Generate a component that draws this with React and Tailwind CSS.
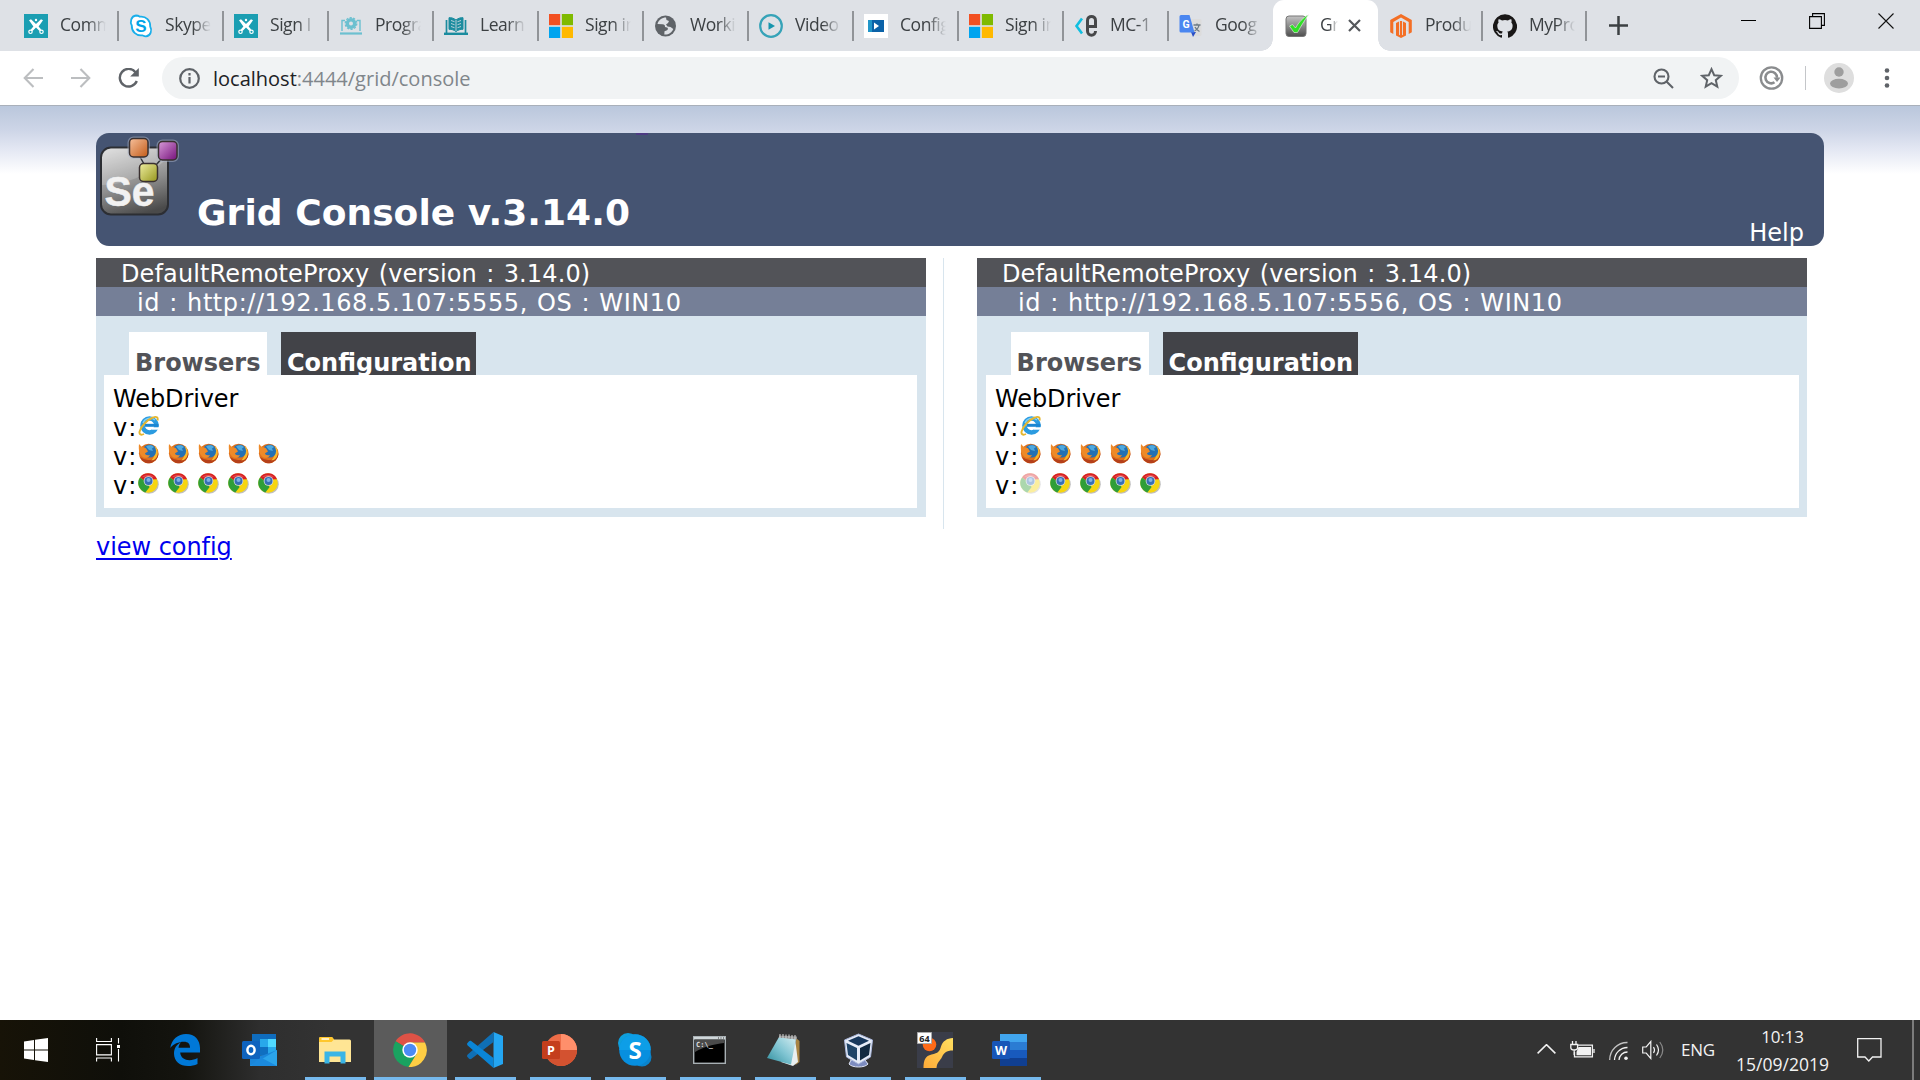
import React from "react";

/* ---------- tab strip favicons ---------- */

const Svg = ({ w = 24, h = 24, box = "0 0 24 24", className = "", children, ...rest }) => (
  <svg width={w} height={h} viewBox={box} className={`shrink-0 ${className}`} fill="none" {...rest}>
    {children}
  </svg>
);

const Scissors = () => (
  <Svg>
    <path d="M0 0h24v24H0z" fill="#1b9eb2" />
    <path d="M5 6.200l2-1L12 10l5-4.800 2 1-4.400 6.300 2.600 3-1.700 1.500-3.500-3.500L8.500 17l-1.700-1.500 2.600-3z" fill="#fff" />
    <circle cx="6.500" cy="17.800" r="1.700" stroke="#fff" strokeWidth="1.200" />
    <circle cx="17.500" cy="17.800" r="1.700" stroke="#fff" strokeWidth="1.200" />
    <circle cx="12" cy="6" r="1.200" fill="#fff" />
  </Svg>
);
const SkypeTab = () => (
  <Svg>
    <path d="M7 1.500c1.500 0 3 .6 4 1.200 6-.7 10.600 4 10.200 9.800 2 3.500.7 9.500-4.200 9.800-1.600.1-2.800-.6-3.800-1C7 22 2.500 17.500 2.800 11.500.8 8 2 2 7 1.500z" fill="#fff" stroke="#19aeea" strokeWidth="1.800" />
    <text x="12" y="18" textAnchor="middle" fontFamily="Liberation Sans" fontWeight="700" fontSize="17" fill="#00a4e8">S</text>
  </Svg>
);
const Program = () => (
  <Svg stroke="#6cc0d0">
    <path d="M3 17V6.500h3M18 6.500h3V17" strokeWidth="1.400" />
    <circle cx="12" cy="9.500" r="3.700" strokeWidth="3.400" />
    <circle cx="12" cy="9.500" r="5.800" strokeWidth="1.300" strokeDasharray="2.200 1.400" />
    <path d="M1 19.500h22" strokeWidth="2.200" />
  </Svg>
);
const Book = () => (
  <Svg stroke="#1b8c9f">
    <path d="M2.500 19V6M21.500 19V6" strokeWidth="1.700" />
    <path d="M12 6C9.500 4 7.500 3.600 5 3.700v11.600c2.500-.1 5 .6 7 2.300 2-1.700 4.500-2.400 7-2.300V3.700C16.500 3.600 14.500 4 12 6z" fill="#1b8c9f" />
    <path d="M7 6.500l3.500 1.200M7 9.500l3.500 1.200M7 12.500l3.500 1.200M17 6.500l-3.500 1.200M17 9.500l-3.500 1.200M17 12.500l-3.500 1.200M12 6v11" stroke="#dee1e6" strokeWidth=".8" />
    <path d="M0 19.800h24" strokeWidth="2.400" />
  </Svg>
);
const Microsoft = () => (
  <Svg>
    <path d="M0 0h11.200v11.200H0z" fill="#f25022" />
    <path d="M12.800 0H24v11.200H12.800z" fill="#7fba00" />
    <path d="M0 12.800h11.200V24H0z" fill="#00a4ef" />
    <path d="M12.800 12.800H24V24H12.800z" fill="#ffb900" />
  </Svg>
);
const Globe = () => (
  <Svg>
    <circle cx="11.500" cy="12" r="10.500" fill="#5f6368" />
    <path d="M12 3.500C8 3.500 4.500 6 3.500 10l5 .2c2 0 2.500 1 2.500 2.800l2 .5c1.500.5 1 2.500-.5 3l-2 .8-.2 3.200c4 .5 7.500-2 9-5.500l-2.800-2-3-.5-1.500-2 2-1.500 1-2-2.500-1z" fill="#dee1e6" />
    <path d="M13 4.500l3 3-1.500 3 3 2.500 3-1c0-4-3-7-7.500-7.500z" fill="#5f6368" />
  </Svg>
);
const Video = () => (
  <Svg>
    <circle cx="12" cy="12" r="10.800" stroke="#36a3b8" strokeWidth="2.200" />
    <path d="M9.500 8.200v7.600l6.500-3.800z" fill="#1795ad" />
  </Svg>
);
const ConfigFav = () => (
  <Svg>
    <path d="M0 0h24v24H0z" fill="#fff" />
    <path d="M4 6h16v12H4z" fill="#0b62a8" />
    <path d="M4 6h4v12H4z" fill="#2196c9" />
    <path d="M10 8.500v7l5-3.500z" fill="#fff" />
  </Svg>
);
const Mc = () => (
  <Svg>
    <path d="M8 4.500L2.500 12 8 19.500" stroke="#10bfe0" strokeWidth="2.600" />
    <path d="M13.500 12.500h8V6.500c0-5.500-8-5.500-8 0v10.500c0 5.500 8 5.500 8 0" stroke="#464749" strokeWidth="3" />
  </Svg>
);
const Translate = () => (
  <Svg>
    <path d="M9 5h12a1.500 1.500 0 011.500 1.500v14A1.500 1.500 0 0121 22h-7z" fill="#dcdcdc" />
    <path d="M12 18h5l-3 5z" fill="#2b4fc4" />
    <path d="M2 1h8.500L15.500 18.500H2A1.500 1.500 0 01.500 17V2.500A1.500 1.500 0 012 1z" fill="#4a86f0" />
    <text x="7" y="13.500" textAnchor="middle" fontFamily="Roboto" fontWeight="700" fontSize="10.500" fill="#fff">G</text>
    <path d="M14.500 11h7M18 9.500V11M20 11c-.5 3-2.500 5-4.500 6M16 13c1 2 2.500 3.500 4.500 4.500" stroke="#6d7b85" strokeWidth="1.300" />
  </Svg>
);
const CheckFav = () => (
  <Svg>
    <defs>
      <linearGradient id="ck" x1="0" y1="0" x2="0" y2="1">
        <stop offset="0" stopColor="#c4c4c4" />
        <stop offset="1" stopColor="#4e4e4e" />
      </linearGradient>
    </defs>
    <rect x="1" y="2" width="20" height="20.500" rx="3" fill="url(#ck)" stroke="#777" />
    <path d="M4.500 12l3-1.500 3 3.500C13.500 8.500 18 3.500 23.500.8 19.500 6.500 16 12 12.500 18.500H9z" fill="#2fe025" stroke="#eee" strokeWidth=".6" />
  </Svg>
);
const Magento = () => (
  <Svg fill="#f46f25">
    <path d="M12 0L1.200 6v12.200l3.100 1.700V7.900L12 3.600l7.700 4.300v12l3.100-1.700V6z" />
    <path d="M7 9v12.500l5 2.500 5-2.500V9l-3-1.500v13.200l-.9.500V7h-2.200v14.200l-.9-.5V7.500z" />
  </Svg>
);
const Github = () => (
  <Svg fill="#191717">
    <path d="M12 .3a12 12 0 00-3.800 23.400c.6.100.8-.3.800-.6v-2c-3.300.7-4-1.600-4-1.600-.6-1.400-1.400-1.800-1.400-1.800-1-.7.100-.7.100-.7 1.200 0 1.900 1.200 1.900 1.200 1 1.800 2.800 1.300 3.500 1 0-.8.400-1.300.7-1.600-2.700-.3-5.500-1.300-5.500-6 0-1.200.5-2.300 1.300-3.100-.2-.4-.6-1.600 0-3.200 0 0 1-.3 3.400 1.200a11.500 11.500 0 016 0c2.300-1.500 3.300-1.200 3.300-1.200.6 1.600.2 2.800 0 3.200.9.800 1.300 1.900 1.300 3.200 0 4.600-2.800 5.600-5.500 5.900.5.400.9 1 .9 2.200v3.300c0 .3.100.7.800.6A12 12 0 0012 .3" />
  </Svg>
);

const TABS = [
  [Scissors, "Comm"], [SkypeTab, "Skype"], [Scissors, "Sign I"], [Program, "Progra"], [Book, "Learn"],
  [Microsoft, "Sign in"], [Globe, "Worki"], [Video, "Video"], [ConfigFav, "Config"], [Microsoft, "Sign in"],
  [Mc, "MC-1"], [Translate, "Goog"],
];

function Tab({ Icon, label, wide = true, last = false }) {
  return (
    <div className={`${wide ? "w-[105px]" : "w-[104px]"} relative flex h-[51px] shrink-0 items-center pl-[11px]`}>
      <Icon />
      <span className="-mt-[2px] ml-3 w-[46px] overflow-hidden mask-r-from-60% text-[17.5px] tracking-[-0.45px] whitespace-nowrap text-[#3c4043]">{label}</span>
      {!last && <i className="absolute top-[11px] -right-px h-[30px] w-[2px] bg-[#919498]" />}
    </div>
  );
}

function TabStrip() {
  return (
    <div className="flex h-[51px] bg-[#dee1e6] pl-[13px]">
      {TABS.map(([Icon, label], i) => (
        <Tab key={i} Icon={Icon} label={label} last={i === TABS.length - 1} />
      ))}
      <div className="relative flex h-[51px] w-[105px] shrink-0 items-center rounded-t-[11px] bg-white pl-3">
        <i className="absolute bottom-0 -left-[12px] size-3 bg-[radial-gradient(circle_at_0_0,transparent_11.5px,white_12px)]" />
        <i className="absolute -right-[12px] bottom-0 size-3 bg-[radial-gradient(circle_at_100%_0,transparent_11.5px,white_12px)]" />
        <CheckFav />
        <span className="-mt-[2px] ml-[11px] w-[18px] overflow-hidden mask-r-from-50% text-[17.5px] tracking-[-0.45px] whitespace-nowrap text-[#3c4043]">Gr</span>
        <Svg w={13} h={13} box="0 0 13 13" className="ml-[10px]" stroke="#55585c" strokeWidth="2.200">
          <path d="M1 1l11 11M12 1L1 12" />
        </Svg>
      </div>
      <Tab Icon={Magento} label="Produ" wide={false} />
      <Tab Icon={Github} label="MyPro" wide={false} />
      <div className="flex flex-1 items-start">
        <Svg w={19} h={19} box="0 0 19 19" className="mt-[16px] ml-[23px]" stroke="#3c4043" strokeWidth="2.500">
          <path d="M9.500 0v19M0 9.500h19" />
        </Svg>
        <Svg w={15} h={15} box="0 0 15 15" className="mt-[14px] ml-[113px]" stroke="#000">
          <path d="M0 6.500h15" />
        </Svg>
        <Svg w={16} h={16} box="0 0 16 16" className="mt-[13px] ml-[53px]" stroke="#000" strokeWidth="1.100">
          <path d="M.6 3.600h11.800v11.800H.6zM3.600 3.500V.6h11.800v11.800h-3" />
        </Svg>
        <Svg w={16} h={16} box="0 0 16 16" className="mt-[13px] ml-[53px]" stroke="#111" strokeWidth="1.100">
          <path d="M.5.500l15 15M15.500.500l-15 15" />
        </Svg>
      </div>
    </div>
  );
}

function Toolbar() {
  return (
    <div className="flex h-[54px] items-center bg-white">
      <Svg w={20} h={20} box="0 0 20 20" className="ml-[23px]" stroke="#bcbec0" strokeWidth="2.100">
        <path d="M20 10H2M10.500 1L1.700 10l8.800 9" />
      </Svg>
      <Svg w={20} h={20} box="0 0 20 20" className="ml-[28px]" stroke="#bcbec0" strokeWidth="2.100">
        <path d="M0 10h18M9.500 1l8.800 9-8.800 9" />
      </Svg>
      <Svg w={22} h={20} box="0 0 22 20" className="ml-[27px]">
        <path d="M17.500 4.200A8.800 8.800 0 1018.800 13" stroke="#5f6368" strokeWidth="2.400" />
        <path d="M20.800 0v8.500h-8.600z" fill="#5f6368" />
      </Svg>
      <div className="ml-[22px] flex h-[42px] w-[1577px] items-center rounded-full bg-[#f1f3f4] pr-[16px] pl-[17px]">
        <Svg w={21} h={21} box="0 0 21 21">
          <circle cx="10.500" cy="10.500" r="9.300" stroke="#5f6368" strokeWidth="2.200" />
          <path d="M10.500 9v6.500M10.500 5v2.400" stroke="#5f6368" strokeWidth="2.200" />
        </Svg>
        <span className="mt-px ml-[13px] text-xl whitespace-nowrap text-[#80868b]">
          <span className="text-[#202124]">localhost</span>:4444/grid/console
        </span>
        <Svg w={21} h={21} box="0 0 21 21" className="ml-auto" stroke="#5f6368" strokeWidth="2.100">
          <circle cx="8.500" cy="8.500" r="7" />
          <path d="M13.500 13.500l6.500 6.500M5 8.500h7" />
        </Svg>
        <Svg w={23} h={22} box="0 0 23 22" className="ml-[26px]" stroke="#5f6368" strokeWidth="2">
          <path d="M11.500 2.200l2.700 6 6.600.6-5 4.400 1.500 6.400-5.800-3.400-5.800 3.400 1.500-6.400-5-4.400 6.600-.6z" />
        </Svg>
      </div>
      <Svg w={25} h={24} box="0 0 25 24" className="ml-[20px]" stroke="#8a8c8e" strokeWidth="2.300">
        <circle cx="12.500" cy="12" r="10.700" />
        <path d="M15.500 16.300a5.800 5.800 0 112.500-4.500" strokeWidth="2.600" />
        <path d="M14.500 11.500h7l-3.500 4.500z" fill="#8a8c8e" stroke="none" />
      </Svg>
      <i className="ml-[21px] h-6 w-px bg-[#c4c6c9]" />
      <Svg w={30} h={30} box="0 0 30 30" className="ml-[18px]">
        <circle cx="15" cy="15" r="15" fill="#dedede" />
        <circle cx="15" cy="9" r="4.700" fill="#9e9e9e" />
        <ellipse cx="15" cy="20.600" rx="9" ry="4.900" fill="#9e9e9e" />
      </Svg>
      <Svg w={6} h={20} box="0 0 6 20" className="ml-[30px]">
        <circle cx="3" cy="2.500" r="2.300" fill="#5f6368" />
        <circle cx="3" cy="10" r="2.300" fill="#5f6368" />
        <circle cx="3" cy="17.500" r="2.300" fill="#5f6368" />
      </Svg>
    </div>
  );
}

/* ---------- grid console page ---------- */

const SeleniumLogo = () => (
  <svg width="84" height="86" viewBox="0 0 84 86" className="shrink-0">
    <defs>
      <linearGradient id="seBody" x1="0.300" y1="0" x2="0.600" y2="1">
        <stop offset="0" stopColor="#d2d2d2" />
        <stop offset=".55" stopColor="#8e8e8e" />
        <stop offset="1" stopColor="#4a4a4a" />
      </linearGradient>
      <linearGradient id="seO" x1="0" y1="0" x2="1" y2="1">
        <stop offset="0" stopColor="#f7c19c" />
        <stop offset="1" stopColor="#c25a18" />
      </linearGradient>
      <linearGradient id="seP" x1="0" y1="0" x2="1" y2="1">
        <stop offset="0" stopColor="#d79ad8" />
        <stop offset="1" stopColor="#75107a" />
      </linearGradient>
      <linearGradient id="seY" x1="0" y1="0" x2="1" y2="1">
        <stop offset="0" stopColor="#eeeea0" />
        <stop offset="1" stopColor="#96961c" />
      </linearGradient>
    </defs>
    <rect x="5" y="14.500" width="67" height="67" rx="10" fill="url(#seBody)" stroke="#2c2e33" strokeWidth="2" />
    <path d="M6 52c22 0 45-9 65-26V24c0-5-3-8.500-8-8.500H15c-5 0-9 3.500-9 8.500z" fill="#fff" opacity=".18" />
    <path d="M43 22l5 9M68 23l-8 9" stroke="#33363c" strokeWidth="1.500" />
    <g stroke="#aab4c9" strokeOpacity=".5" strokeWidth="4">
      <rect x="33.500" y="5.500" width="18.500" height="18.500" rx="4" />
      <rect x="62.500" y="8.500" width="18.500" height="18.500" rx="4" />
    </g>
    <g stroke="#3a3030" strokeWidth="1.500">
      <rect x="33.500" y="5.500" width="18.500" height="18.500" rx="4" fill="url(#seO)" />
      <rect x="62.500" y="8.500" width="18.500" height="18.500" rx="4" fill="url(#seP)" />
      <rect x="43.500" y="30.500" width="18" height="18" rx="4" fill="url(#seY)" />
    </g>
    <text x="8.500" y="73.200" fontFamily="Liberation Sans" fontWeight="700" fontSize="42.500" textLength="50" lengthAdjust="spacingAndGlyphs" fill="#f2f2f2" stroke="#f2f2f2" strokeWidth=".5">Se</text>
  </svg>
);

const IeIcon = () => (
  <svg width="21" height="21" viewBox="0 0 21 21" className="shrink-0">
    <circle cx="11.500" cy="10.500" r="7" fill="none" stroke="#2b9be0" strokeWidth="4.600" />
    <path d="M7 10.300h13.500" stroke="#1b86d2" strokeWidth="3" />
    <path d="M14 12.300h7v2.400h-7z" fill="#fff" />
    <path d="M5 8a7.500 7.500 0 0112-3" fill="none" stroke="#7fd0f7" strokeWidth="1.400" />
    <path d="M19.500 5.500c.8-2.800-.8-4.600-4.500-3C9 4.800 2.800 11.500 1.600 16.500c-.7 3 1.400 4 4.400 2.500" fill="none" stroke="#e4b62f" strokeWidth="1.900" />
  </svg>
);
const FirefoxIcon = () => (
  <svg width="21" height="21" viewBox="0 0 21 21" className="-mt-px shrink-0">
    <circle cx="10.700" cy="10.500" r="9.800" fill="#e0701a" />
    <path d="M2 14c2 5 6.500 6.700 10 6.200 5-1 8.500-5 8.500-9.900-2 5-6.500 7.200-10.500 6.700-3-.4-5.500-1.500-8-3z" fill="#b5401a" />
    <path d="M17 3c3 3 3.500 8 1.500 11.500-1.500 2.200-3.500 3-5.500 2.800 3-2 4.500-6 3-9.500z" fill="#f9b829" />
    <circle cx="11.500" cy="8" r="6.600" fill="#2370b4" />
    <path d="M8 3.500c3-2 6-1.400 8 .5l-2 1.500 1 2.500-4-1z" fill="#4ea9de" />
    <path d="M1 1l3 3.300C6 3.800 7.500 4.500 8.500 6L10 8.500l-3 1.800c.5 2 2.500 2.400 5 1.600-1.200 2.600-4 3.600-6.500 2.500C1.500 12.500.2 7 1 1z" fill="#ee8a28" />
  </svg>
);
const ChromeSmall = ({ dim }) => (
  <svg width="21" height="21" viewBox="0 0 21 21" className={`shrink-0 ${dim ? "opacity-40" : ""}`}>
    <ellipse cx="11" cy="11.200" rx="9.800" ry="9.600" fill="#000" opacity=".25" />
    <circle cx="10" cy="10" r="9.800" fill="#f6d510" />
    <path d="M10 10L2 4.400A9.800 9.800 0 0119 6.200l-9 .3z" fill="#d71f26" />
    <path d="M10 10L2 4.400A9.800 9.800 0 007.300 19.400l4.200-5.200z" fill="#2f9e38" />
    <path d="M4 4.300C7 1.300 13 1 16 4c-4-1-8-1-12 .3z" fill="#ee7a76" opacity=".6" />
    <circle cx="10.500" cy="8" r="4.800" fill="#ddd" />
    <circle cx="10.500" cy="8" r="4" fill="#356fb5" />
    <circle cx="10.500" cy="7" r="2" fill="#7fb2e4" />
  </svg>
);

function VersionRow({ children }) {
  return (
    <div className="flex h-[29px]">
      <span className="w-[25px] leading-[33px] tracking-[2.3px]">v:</span>
      <span className="mt-[3px] flex gap-[9px]">{children}</span>
    </div>
  );
}

function Proxy({ port, busy = false }) {
  return (
    <section className="h-[259px] w-[830px] bg-[#d8e5ee] text-black">
      <p className="h-[29px] bg-[#525358] pl-[25px] leading-[33px] tracking-[0.13px] text-white [word-spacing:1.5px]">DefaultRemoteProxy (version : 3.14.0)</p>
      <p className="h-[29px] bg-[#757f97] pl-[41px] leading-[33px] tracking-[0.57px] text-white [word-spacing:1px]">id : http://192.168.5.107:{port}, OS : WIN10</p>
      <div className={`flex h-[59px] gap-[14px] pt-4 font-bold ${busy ? "pl-[33.6px]" : "pl-[33px]"}`}>
        <div className="h-[43px] w-[138px] overflow-hidden bg-white pt-[14px] pl-[6px] leading-[34px] text-[#525358]">Browsers</div>
        <div className="h-[43px] w-[195px] overflow-hidden bg-[#424348] pt-[14px] pl-[6px] leading-[34px] text-white">Configuration</div>
      </div>
      <div className={`h-[133px] bg-white pt-2 pl-[9px] ${busy ? "mr-2 ml-[9px]" : "mr-[9px] ml-2"}`}>
        <p className="h-[29px] leading-[33px] tracking-[-0.1px]">WebDriver</p>
        <VersionRow><IeIcon /></VersionRow>
        <VersionRow>{[0, 1, 2, 3, 4].map((i) => <FirefoxIcon key={i} />)}</VersionRow>
        <VersionRow>{[0, 1, 2, 3, 4].map((i) => <ChromeSmall key={i} dim={busy && i === 0} />)}</VersionRow>
      </div>
    </section>
  );
}

function Console() {
  return (
    <main className="h-[915px] border-t border-[#a9b0ba] bg-white bg-[linear-gradient(#bac7dc,#cdd5e7_24px,#e2e6f2_42px,#ffffff_68px)] px-24 pt-[27px] font-['Verdana','DejaVu_Sans',sans-serif] text-2xl">
      <header className="relative flex h-[113px] rounded-[13px] bg-[#455472]">
        <i className="absolute top-0 left-[540px] h-[2px] w-3 bg-[#4d3b82]" />
        <SeleniumLogo />
        <h1 className="mt-[58px] ml-[17px] text-4xl leading-[44px] font-bold tracking-[0.05px] text-white">Grid Console v.3.14.0</h1>
        <a className="mt-[84px] mr-[20px] ml-auto h-[29px] leading-[33px] text-white">Help</a>
      </header>
      <div className="mt-3 flex h-[271px]">
        <Proxy port="5555" />
        <i className="ml-[17px] w-px bg-[#d8e5ee]" />
        <div className="ml-[33px]">
          <Proxy port="5556" busy />
        </div>
      </div>
      <a className="mt-[3px] inline-block leading-[31px] tracking-[-0.05px] text-[#0000ee] underline underline-offset-[3px] decoration-2">view config</a>
    </main>
  );
}

/* ---------- taskbar ---------- */

const WinIcon = () => (
  <Svg>
    <path d="M0 3.400l10-1.400v9.500H0zM11 1.800L24 0v11.500H11zM0 12.500h10V22L0 20.600zM11 12.500h13V24l-13-1.800z" fill="#fff" />
  </Svg>
);
const TaskView = () => (
  <Svg stroke="#fff" strokeWidth="1.100">
    <path d="M.6 0v3.500h14.800V0M.6 6.600h14.800v10.300H.6zM.6 23.500v-3.500h14.800v3.500M22.500 0v5.500M22.500 11v12.500" />
    <path d="M21 7h3v3h-3z" fill="#fff" stroke="none" />
  </Svg>
);
const Edge = () => (
  <Svg w={30} h={32} box="0 0 30 32">
    <path d="M.3 14C1.500 5.500 8 0 16 0c9 0 14 6.200 14 14v4.500H10.200c.3 5 4.500 7.700 9.300 7.700 3 0 5.600-.8 8-2.200v6c-3 1.500-6 2-9.500 2C10 32 4 27.500 4 19.500c0-5 2.500-9 7-11.200-1.500 1.500-2.200 3.500-2.500 5.500H20c0-4-2-6-6-6C8.500 7.800 3.500 10 .3 14z" fill="#0078d7" />
  </Svg>
);
const Outlook = () => (
  <Svg w={35} h={32} box="0 0 35 32">
    <path d="M10 0h24v15H10z" fill="#0f6cbd" />
    <path d="M18 5h8v8h-8z" fill="#28a8ea" />
    <path d="M26 5h8v8h-8z" fill="#50d9ff" />
    <path d="M18 13h8v8h-8z" fill="#0f6fc0" />
    <path d="M26 13h8v8h-8z" fill="#28a8ea" />
    <path d="M8 22l14-1 13-5v16H8z" fill="#1a86da" />
    <path d="M8 32L35 16v16z" fill="#2ba4ea" />
    <path d="M18 23l17 9H9z" fill="#1b8ade" />
    <rect y="7" width="18" height="18" rx="1.500" fill="#0f63be" />
    <ellipse cx="9" cy="16" rx="3.600" ry="4.200" stroke="#fff" strokeWidth="2.500" />
  </Svg>
);
const Explorer = () => (
  <Svg w={32} h={27} box="0 0 32 27">
    <path d="M0 1.500Q0 0 1.500 0H13l2 2.500h15.500Q32 2.500 32 4v21H0z" fill="#ffe594" />
    <path d="M0 5V1.500Q0 0 1.500 0H13l2 2.500L12.500 5z" fill="#ffc72c" />
    <path d="M2.500 2h7.500" stroke="#fff" strokeWidth="1.400" />
    <path d="M5.500 26.500v-12h21v12h-5v-7h-11v7z" fill="#3ab5e6" />
  </Svg>
);
const Chrome = () => (
  <Svg w={34} h={34} box="0 0 34 34">
    <path d="M17 17L2.600 8.200A17 17 0 0132 9.500H17z" fill="#de5246" />
    <path d="M17 17L2.600 8.200A17 17 0 0015.500 34l8-13z" fill="#1aa260" />
    <path d="M17 9.500h15A17 17 0 0115.500 34l8-13z" fill="#ffce44" />
    <circle cx="17" cy="17" r="7.700" fill="#fff" />
    <circle cx="17" cy="17" r="6.200" fill="#4c8bf5" />
  </Svg>
);
const VsCode = () => (
  <Svg w={36} h={36} box="0 0 36 36">
    <path d="M26.500 0L36 4v28l-9.500 4z" fill="#24a6f2" />
    <path d="M26.500 0v10L4.500 26.700c-1 .7-2 .5-2.700-.2L.5 25c-.7-.8-.6-1.700.2-2.500z" fill="#0f6fb5" />
    <path d="M26.500 36V26L4.500 9.300c-1-.7-2-.5-2.700.2L.5 11c-.7.800-.6 1.700.2 2.500z" fill="#0a85d6" />
  </Svg>
);
const PowerPoint = () => (
  <Svg w={35} h={32} box="0 0 35 32">
    <circle cx="19" cy="16" r="16" fill="#ed6c47" />
    <path d="M19 0a16 16 0 0116 16H19z" fill="#ff8f6b" />
    <path d="M3 16a16 16 0 0032 0z" fill="#d35230" />
    <rect y="7" width="18" height="18" rx="1.500" fill="#c43e1c" />
    <text x="9" y="20.500" textAnchor="middle" fontFamily="Open Sans" fontWeight="700" fontSize="12.500" fill="#fff">P</text>
  </Svg>
);
const Skype = () => (
  <Svg w={34} h={34} box="0 0 34 34">
    <circle cx="10" cy="10" r="10" fill="#0f9fdc" />
    <circle cx="24" cy="24" r="9.500" fill="#0a84cc" />
    <circle cx="17" cy="17" r="15.800" fill="#078fdf" />
    <path d="M1.200 17a15.800 15.800 0 0131.600 0z" fill="#10a4ea" opacity=".7" />
    <text x="17" y="25.500" textAnchor="middle" fontFamily="Open Sans" fontWeight="700" fontSize="24" fill="#fff">S</text>
  </Svg>
);
const Cmd = () => (
  <Svg w={33} h={28} box="0 0 33 28">
    <rect x=".7" y=".7" width="31.600" height="26.600" fill="#000" stroke="#a8b0b4" strokeWidth="1.400" />
    <path d="M1 1h31v2.500H1z" fill="#cfd6d9" />
    <path d="M2 4h29v3C21 8 10 11 2 16z" fill="#4a4a4a" />
    <path d="M25 2h1M27.500 2h1M30 2h1" stroke="#333" />
    <text x="3" y="11" fontFamily="DejaVu Sans Mono" fontWeight="700" fontSize="7" fill="#ddd">C:\_</text>
  </Svg>
);
const Notepad = () => (
  <Svg w={34} h={33} box="0 0 34 33">
    <defs>
      <linearGradient id="np" x1="0" y1="1" x2="1" y2="0">
        <stop offset="0" stopColor="#2d8c9b" />
        <stop offset=".5" stopColor="#7fc4d2" />
        <stop offset="1" stopColor="#d6eef2" />
      </linearGradient>
    </defs>
    <path d="M29 4l3.500 3v21l-4 3z" fill="#a88444" />
    <path d="M28 4l3 24-5 4-12-4z" fill="#e9eff0" />
    <path d="M12 3l17 2-5 25.500L0 24z" fill="url(#np)" />
    <path d="M12 1.500l18 1v3l-18-2z" fill="#8f8f8f" />
    <path d="M13 0v4M16 0v4M19 .500v4M22 .500v4M25 1v4M28 1v4" stroke="#d8d8d8" strokeWidth="1" />
  </Svg>
);
const VBox = () => (
  <Svg w={31} h={35} box="0 0 31 35">
    <path d="M8 27l14 0 3 4c-3 4-16 4-19 0z" fill="#7d8cc0" stroke="#dfe5f5" />
    <path d="M15.500 1l14 6-2 17-12 7-12-7-2-17z" fill="#e6ecf8" stroke="#a9b7dc" />
    <path d="M15.500 3.200l10.500 4.600-10.500 5L5 7.800z" fill="#17375c" />
    <path d="M3.500 10l10.500 5v12.500l-9-5.500z" fill="#1f4468" />
    <path d="M27.500 10L17 15v12.500l9-5.500z" fill="#122a42" />
  </Svg>
);
const Uft = () => (
  <Svg w={36} h={36} box="0 0 36 36">
    <defs>
      <linearGradient id="uf" x1="1" y1="0" x2="0" y2="1">
        <stop offset="0" stopColor="#ffdf60" />
        <stop offset="1" stopColor="#ffab38" />
      </linearGradient>
    </defs>
    <path d="M0 0h36v36H0z" fill="#3a3d49" />
    <path d="M36 6v12.500c-7 0-9 2.500-11 6.500-2 4-5 5-5.500 11H6.500c0-8 2-12 8-13.500 7-1.500 8-3 9.500-8S30 6 36 6z" fill="url(#uf)" />
    <circle cx="12.500" cy="12.500" r="6.800" fill="#ff6a18" />
    <path d="M.5.500h14v11H.500z" fill="#fff" stroke="#aaa" />
    <text x="7.500" y="9.500" textAnchor="middle" fontFamily="Open Sans" fontWeight="700" fontSize="9" fill="#222">64</text>
  </Svg>
);
const Word = () => (
  <Svg w={35} h={32} box="0 0 35 32">
    <path d="M8 0h27v8.500H8z" fill="#41a5ee" />
    <path d="M8 8h27v8.500H8z" fill="#2b7cd3" />
    <path d="M8 16h27v8.500H8z" fill="#185abd" />
    <path d="M8 24h27v8H8z" fill="#103f91" />
    <rect y="7" width="18" height="18" rx="1.500" fill="#1756b8" />
    <text x="9" y="20.500" textAnchor="middle" fontFamily="Open Sans" fontWeight="700" fontSize="12.500" fill="#fff">W</text>
  </Svg>
);

const RUNNING = [
  [Explorer, "pr-px"], [Chrome, "pr-px"], [VsCode, "pr-px"], [PowerPoint, "pr-[2px]"], [Skype, "pr-px"],
  [Cmd, "pr-[2px]"], [Notepad, "pr-[3px]"], [VBox, "pr-[5px]"], [Uft, "pr-px"], [Word, "pr-[2px]"],
];

function Taskbar() {
  return (
    <footer className="flex h-[60px] bg-[linear-gradient(90deg,#171307,#0f0f0a_120px,#14140f_185px,#2e2e2e_260px,#333333_330px)]">
      <div className="flex w-[72px] items-center justify-center"><WinIcon /></div>
      <div className="flex w-[72px] items-center justify-center"><TaskView /></div>
      <div className="flex w-[82px] items-center justify-center"><Edge /></div>
      <div className="flex w-[68px] items-center justify-center pr-px"><Outlook /></div>
      <div className="flex">
        {RUNNING.map(([Icon, nudge], i) => (
          <div key={i} className="flex w-[75px] shrink-0 flex-col items-center pl-2">
            <div className={`flex h-[57px] items-center justify-center pt-[3px] ${nudge} ${i === 1 ? "w-[73px] bg-[#5b5b5b]" : "w-[61px]"}`}>
              <Icon />
            </div>
            <i className={`h-[3px] bg-[#76b9ed] ${i === 1 ? "w-[73px]" : "w-[61px]"}`} />
          </div>
        ))}
      </div>
      <div className="ml-auto flex items-center text-[17.500px] text-[#f2f2f2]">
        <Svg w={19} h={10} box="0 0 19 10" className="-mt-[2px]" stroke="#f2f2f2" strokeWidth="1.500"><path d="M.6 9.400l8.900-8.800 8.900 8.800" /></Svg>
        <Svg w={25} h={18} box="0 0 25 18" className="ml-[14px]" stroke="#f2f2f2" strokeWidth="1.300">
          <path d="M7 4.200h15.400v11.600H4.500V11M24 8v4" />
          <path d="M8.500 6h12.500v8.200H6.500V11z" fill="#f2f2f2" stroke="none" />
          <path d="M2.500 0v3M6 0v3M.8 3.500h6.800v3Q7.600 9 4.200 9T.8 6.500zM4.200 9v5" />
        </Svg>
        <Svg w={20} h={20} box="0 0 20 20" className="mt-px ml-[14px]" stroke="#f2f2f2" strokeWidth="1.300">
          <path d="M.7 19A17.500 17.500 0 0118.500 1.500" opacity=".75" />
          <path d="M5.500 19A13 13 0 0118.500 6.500M10 19a8.500 8.500 0 018.500-8" />
          <circle cx="17" cy="17.300" r="1.800" fill="#f2f2f2" stroke="none" />
        </Svg>
        <Svg w={23} h={20} box="0 0 23 20" className="ml-[13px]" stroke="#f2f2f2" strokeWidth="1.200">
          <path d="M.7 7h3.500L8.800 1.500v17L4.200 13H.700z" />
          <path d="M11.500 7q2 3 0 6M14.500 4.500q4 5.500 0 11" />
          <path d="M17.800 2q6 8 0 16" opacity=".45" />
        </Svg>
        <span className="ml-[16px] w-[36px] text-[17px] tracking-[-0.3px]">ENG</span>
        <div className="ml-[18px] flex w-[95px] flex-col items-center whitespace-nowrap">
          <span className="h-[28px] text-[17px] leading-[29px] tracking-[-0.2px]">10:13</span>
          <span className="h-[28px] leading-[28px]">15/09/2019</span>
        </div>
        <Svg w={25} h={25} box="0 0 25 25" className="mt-px ml-[27px]" stroke="#f2f2f2" strokeWidth="1.300">
          <path d="M.7.700h23.300v18.300h-8.500L11.800 23 8 19H.700z" />
        </Svg>
        <i className="mr-[6px] ml-[30px] h-[60px] w-[2px] bg-[#7c7c7c]" />
      </div>
    </footer>
  );
}

export default function App() {
  return (
    <div className="h-[1080px] w-[1920px] overflow-hidden bg-white font-['Open_Sans','Noto_Sans',sans-serif]">
      <TabStrip />
      <Toolbar />
      <Console />
      <Taskbar />
    </div>
  );
}
